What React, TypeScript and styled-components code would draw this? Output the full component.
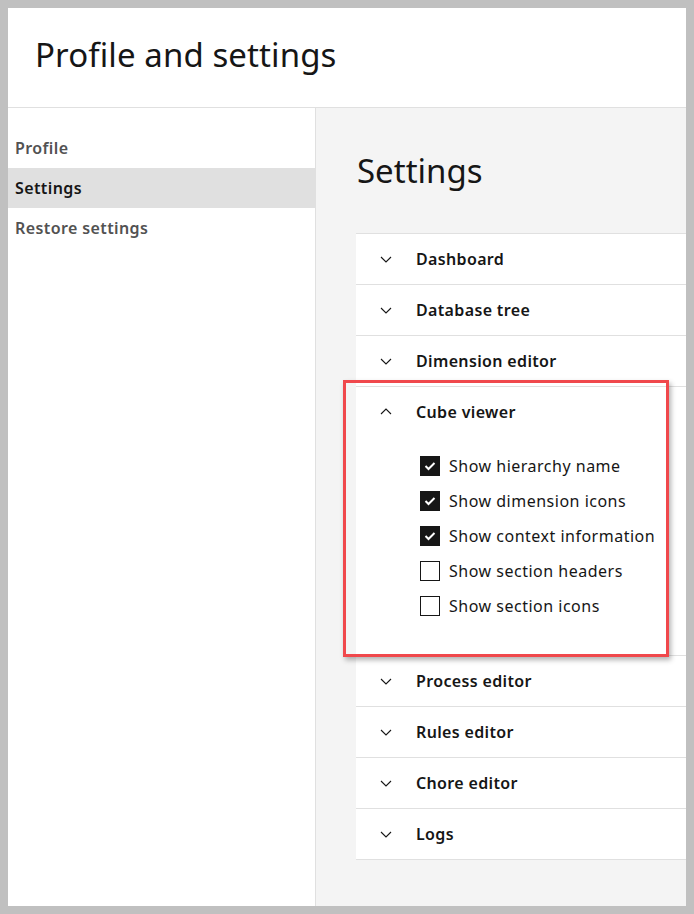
import React from "react";
import styled, { createGlobalStyle } from "styled-components";

const Global = createGlobalStyle`
  html, body { margin: 0; padding: 0; }
  body {
    background: #c0c0c0;
    font-family: "Noto Sans", "Open Sans", sans-serif;
    color: #161616;
  }
  * { box-sizing: border-box; }
`;

const Frame = styled.div`
  width: 694px;
  height: 914px;
  padding: 8px;
  background: #c0c0c0;
`;

const Page = styled.div`
  position: relative;
  width: 100%;
  height: 100%;
  background: #ffffff;
  display: flex;
  flex-direction: column;
  overflow: hidden;
`;

const Header = styled.header`
  height: 100px;
  flex: none;
  border-bottom: 1px solid #e0e0e0;
  display: flex;
  align-items: center;
  padding-left: 27px;
`;

const Title = styled.h1`
  margin: 0 0 6px 0;
  font-size: 33px;
  font-weight: 400;
  letter-spacing: 0.1px;
  color: #161616;
`;

const Body = styled.div`
  flex: 1;
  display: flex;
  min-height: 0;
`;

const Sidebar = styled.nav`
  width: 308px;
  flex: none;
  border-right: 1px solid #e0e0e0;
  padding-top: 20px;
  display: flex;
  flex-direction: column;
`;

const NavItem = styled.div<{ $active?: boolean }>`
  height: 40px;
  display: flex;
  align-items: center;
  padding-left: 7px;
  font-size: 16px;
  font-weight: 600;
  letter-spacing: 0.4px;
  color: ${(p) => (p.$active ? "#161616" : "#525252")};
  background: ${(p) => (p.$active ? "#e0e0e0" : "transparent")};
`;

const Main = styled.main`
  flex: 1;
  background: #f4f4f4;
  padding: 37px 0 0 40px;
  min-width: 0;
`;

const Heading = styled.h2`
  margin: 0 0 36px 1px;
  font-size: 33px;
  font-weight: 400;
  line-height: 52px;
  color: #161616;
`;

const Accordion = styled.div`
  width: 420px;
  background: #ffffff;
  border-top: 1px solid #e0e0e0;
`;

const Item = styled.div`
  border-bottom: 1px solid #e0e0e0;
`;

const ItemHeader = styled.div`
  height: 50px;
  display: flex;
  align-items: center;
  padding-left: 24px;
  padding-bottom: 1px;
  gap: 24px;
  font-size: 16px;
  font-weight: 600;
  letter-spacing: 0.35px;
  color: #161616;
`;

const Chevron = styled.svg<{ $open?: boolean }>`
  width: 12px;
  height: 12px;
  flex: none;
  transform: ${(p) => (p.$open ? "rotate(180deg)" : "none")};
`;

const Panel = styled.div`
  padding: 19px 0 39px 64px;
  display: flex;
  flex-direction: column;
  gap: 15px;
`;

const CheckRow = styled.label`
  display: flex;
  align-items: center;
  gap: 9px;
  height: 20px;
  font-size: 16px;
  letter-spacing: 0.5px;
  color: #161616;
`;

const Box = styled.span<{ $checked?: boolean }>`
  width: 20px;
  height: 20px;
  flex: none;
  display: flex;
  align-items: center;
  justify-content: center;
  background: ${(p) => (p.$checked ? "#161616" : "#ffffff")};
  border: 1px solid #161616;
`;

const Highlight = styled.div`
  position: absolute;
  left: 335px;
  top: 372px;
  width: 326px;
  height: 277px;
  border: 3px solid #f0484c;
  box-shadow: 2px 3px 5px rgba(0, 0, 0, 0.3);
  pointer-events: none;
`;

const ChevronIcon = ({ open }: { open?: boolean }) => (
  <Chevron $open={open} viewBox="0 0 12 12">
    <path d="M1 4 L6 9 L11 4" fill="none" stroke="#161616" strokeWidth="1.1" />
  </Chevron>
);

const Checkbox = ({ checked, label }: { checked?: boolean; label: string }) => (
  <CheckRow>
    <Box $checked={checked}>
      {checked && (
        <svg width="12" height="10" viewBox="0 0 12 10">
          <path d="M1.5 5 L4.5 8 L10.5 2" fill="none" stroke="#ffffff" strokeWidth="2" />
        </svg>
      )}
    </Box>
    {label}
  </CheckRow>
);

const sections = [
  "Dashboard",
  "Database tree",
  "Dimension editor",
  "Cube viewer",
  "Process editor",
  "Rules editor",
  "Chore editor",
  "Logs",
];

const options = [
  { label: "Show hierarchy name", checked: true },
  { label: "Show dimension icons", checked: true },
  { label: "Show context information", checked: true },
  { label: "Show section headers", checked: false },
  { label: "Show section icons", checked: false },
];

export default function App() {
  return (
    <>
      <Global />
      <Frame>
        <Page>
          <Header>
            <Title>Profile and settings</Title>
          </Header>
          <Body>
            <Sidebar>
              <NavItem>Profile</NavItem>
              <NavItem $active>Settings</NavItem>
              <NavItem>Restore settings</NavItem>
            </Sidebar>
            <Main>
              <Heading>Settings</Heading>
              <Accordion>
                {sections.map((s) => {
                  const open = s === "Cube viewer";
                  return (
                    <Item key={s}>
                      <ItemHeader>
                        <ChevronIcon open={open} />
                        {s}
                      </ItemHeader>
                      {open && (
                        <Panel>
                          {options.map((o) => (
                            <Checkbox key={o.label} label={o.label} checked={o.checked} />
                          ))}
                        </Panel>
                      )}
                    </Item>
                  );
                })}
              </Accordion>
            </Main>
          </Body>
          <Highlight />
        </Page>
      </Frame>
    </>
  );
}
